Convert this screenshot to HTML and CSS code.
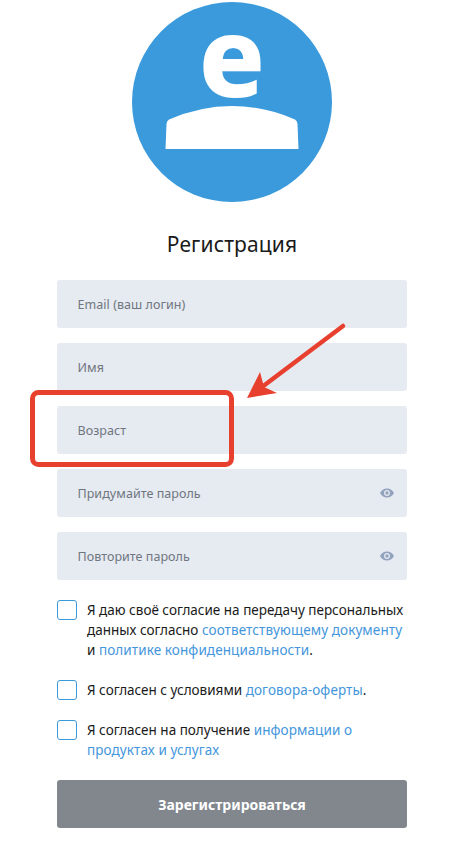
FILE: index.html
```html
<!DOCTYPE html>
<html lang="ru">
<head>
    <meta charset="UTF-8">
    <meta name="viewport" content="width=device-width, initial-scale=1.0">
    <title>Регистрация</title>
    <link rel="stylesheet" href="styles.css">
</head>
<body>

    <div class="page">
        <!-- Logo -->
        <svg class="logo" width="200" height="200" viewBox="0 0 200 200">
            <circle cx="100" cy="100" r="100" fill="#3a9adb"/>
            <text class="logo-letter" x="100" y="95" text-anchor="middle">e</text>
            <path d="M34.500 122 Q34.500 119 37 117.500 Q68 104 100 104 Q132 104 163 117.500 Q165.500 119 165.500 122 L166.500 147 L33.500 147 Z" fill="#fff"/>
        </svg>

        <h1 class="title">Регистрация</h1>

        <form class="form">
            <div class="field"><span class="field-label">Email (ваш логин)</span></div>
            <div class="field"><span class="field-label">Имя</span></div>
            <div class="field"><span class="field-label">Возраст</span></div>
            <div class="field">
                <span class="field-label">Придумайте пароль</span>
                <svg class="eye" width="14" height="10" viewBox="0 0 14 10">
                    <path fill-rule="evenodd" d="M7 0.500C3.800 0.500 1.200 2.500 0 5C1.200 7.500 3.800 9.500 7 9.500C10.200 9.500 12.800 7.500 14 5C12.800 2.500 10.200 0.500 7 0.500ZM7 2C8.700 2 10 3.300 10 5C10 6.700 8.700 8 7 8C5.300 8 4 6.700 4 5C4 3.300 5.300 2 7 2Z"/>
                    <circle cx="7" cy="5" r="1.700"/>
                </svg>
            </div>
            <div class="field">
                <span class="field-label">Повторите пароль</span>
                <svg class="eye" width="14" height="10" viewBox="0 0 14 10">
                    <path fill-rule="evenodd" d="M7 0.500C3.800 0.500 1.200 2.500 0 5C1.200 7.500 3.800 9.500 7 9.500C10.200 9.500 12.800 7.500 14 5C12.800 2.500 10.200 0.500 7 0.500ZM7 2C8.700 2 10 3.300 10 5C10 6.700 8.700 8 7 8C5.300 8 4 6.700 4 5C4 3.300 5.300 2 7 2Z"/>
                    <circle cx="7" cy="5" r="1.700"/>
                </svg>
            </div>

            <div class="checks">
                <div class="check">
                    <span class="box"></span>
                    <p class="check-text">Я даю своё согласие на передачу персональных данных согласно <a href="#">соответствующему документу</a> и <a href="#">политике конфиденциальности</a>.</p>
                </div>
                <div class="check">
                    <span class="box"></span>
                    <p class="check-text">Я согласен с условиями <a href="#">договора-оферты</a>.</p>
                </div>
                <div class="check">
                    <span class="box"></span>
                    <p class="check-text">Я согласен на получение <a href="#">информации о продуктах и услугах</a></p>
                </div>
            </div>

            <button type="button" class="submit">Зарегистрироваться</button>
        </form>
    </div>

    <!-- Red annotation over the form -->
    <svg class="marks" width="474" height="844" viewBox="0 0 474 844">
        <rect x="32.500" y="392.500" width="199" height="72" rx="6" fill="none" stroke="#e8402f" stroke-width="5"/>
        <line x1="343" y1="326" x2="262" y2="387" stroke="#e8402f" stroke-width="4.500" stroke-linecap="round"/>
        <polygon points="247,398 260,372 264,387 277,393" fill="#e8402f"/>
    </svg>

</body>
</html>
```

FILE: styles.css
```css
body {
    margin: 0;
    background: #fff;
    font-family: "Noto Sans", Arial, sans-serif;
    color: #1a1a1a;
    overflow: hidden;
}

.page {
    width: 350px;
    margin-left: 57px;
    padding-top: 2px;
    display: flex;
    flex-direction: column;
    align-items: center;
}

/* Logo */
.logo {
    display: block;
}

.logo-letter {
    font-family: "Noto Sans", Arial, sans-serif;
    font-size: 110px;
    font-weight: 800;
    fill: #fff;
}

.title {
    margin: 29px 0 22px;
    font-size: 21px;
    line-height: 27px;
    font-weight: 400;
    letter-spacing: 0.15px;
}

.form {
    width: 100%;
    display: flex;
    flex-direction: column;
    gap: 15px;
}

/* Inputs */
.field {
    height: 48px;
    padding: 0 20.500px;
    background: #e6eaf1;
    border-radius: 3px;
    display: flex;
    align-items: center;
    justify-content: space-between;
    box-sizing: border-box;
}

.field-label {
    font-size: 12.500px;
    letter-spacing: 0.05px;
    color: #6f7680;
}

.eye {
    margin-right: -7px;
    fill: #93a3bd;
}

/* Checkboxes */
.checks {
    margin-top: 5px;
    display: flex;
    flex-direction: column;
    gap: 20px;
}

.check {
    display: flex;
    gap: 10px;
}

.box {
    flex: none;
    width: 20px;
    height: 20px;
    border: 1px solid #3a9adb;
    border-radius: 3px;
    box-sizing: border-box;
}

.check-text {
    margin: 0;
    font-size: 13.500px;
    line-height: 20px;
}

.check-text a {
    color: #4496dc;
    letter-spacing: 0.1px;
    text-decoration: none;
}

.submit {
    height: 48px;
    margin-top: 5px;
    background: #82878e;
    border: none;
    border-radius: 3px;
    color: white;
    font-family: inherit;
    font-size: 14px;
    font-weight: bold;
}

/* Annotation layer */
.marks {
    position: absolute;
    top: 0;
    left: 0;
    pointer-events: none;
}
```
